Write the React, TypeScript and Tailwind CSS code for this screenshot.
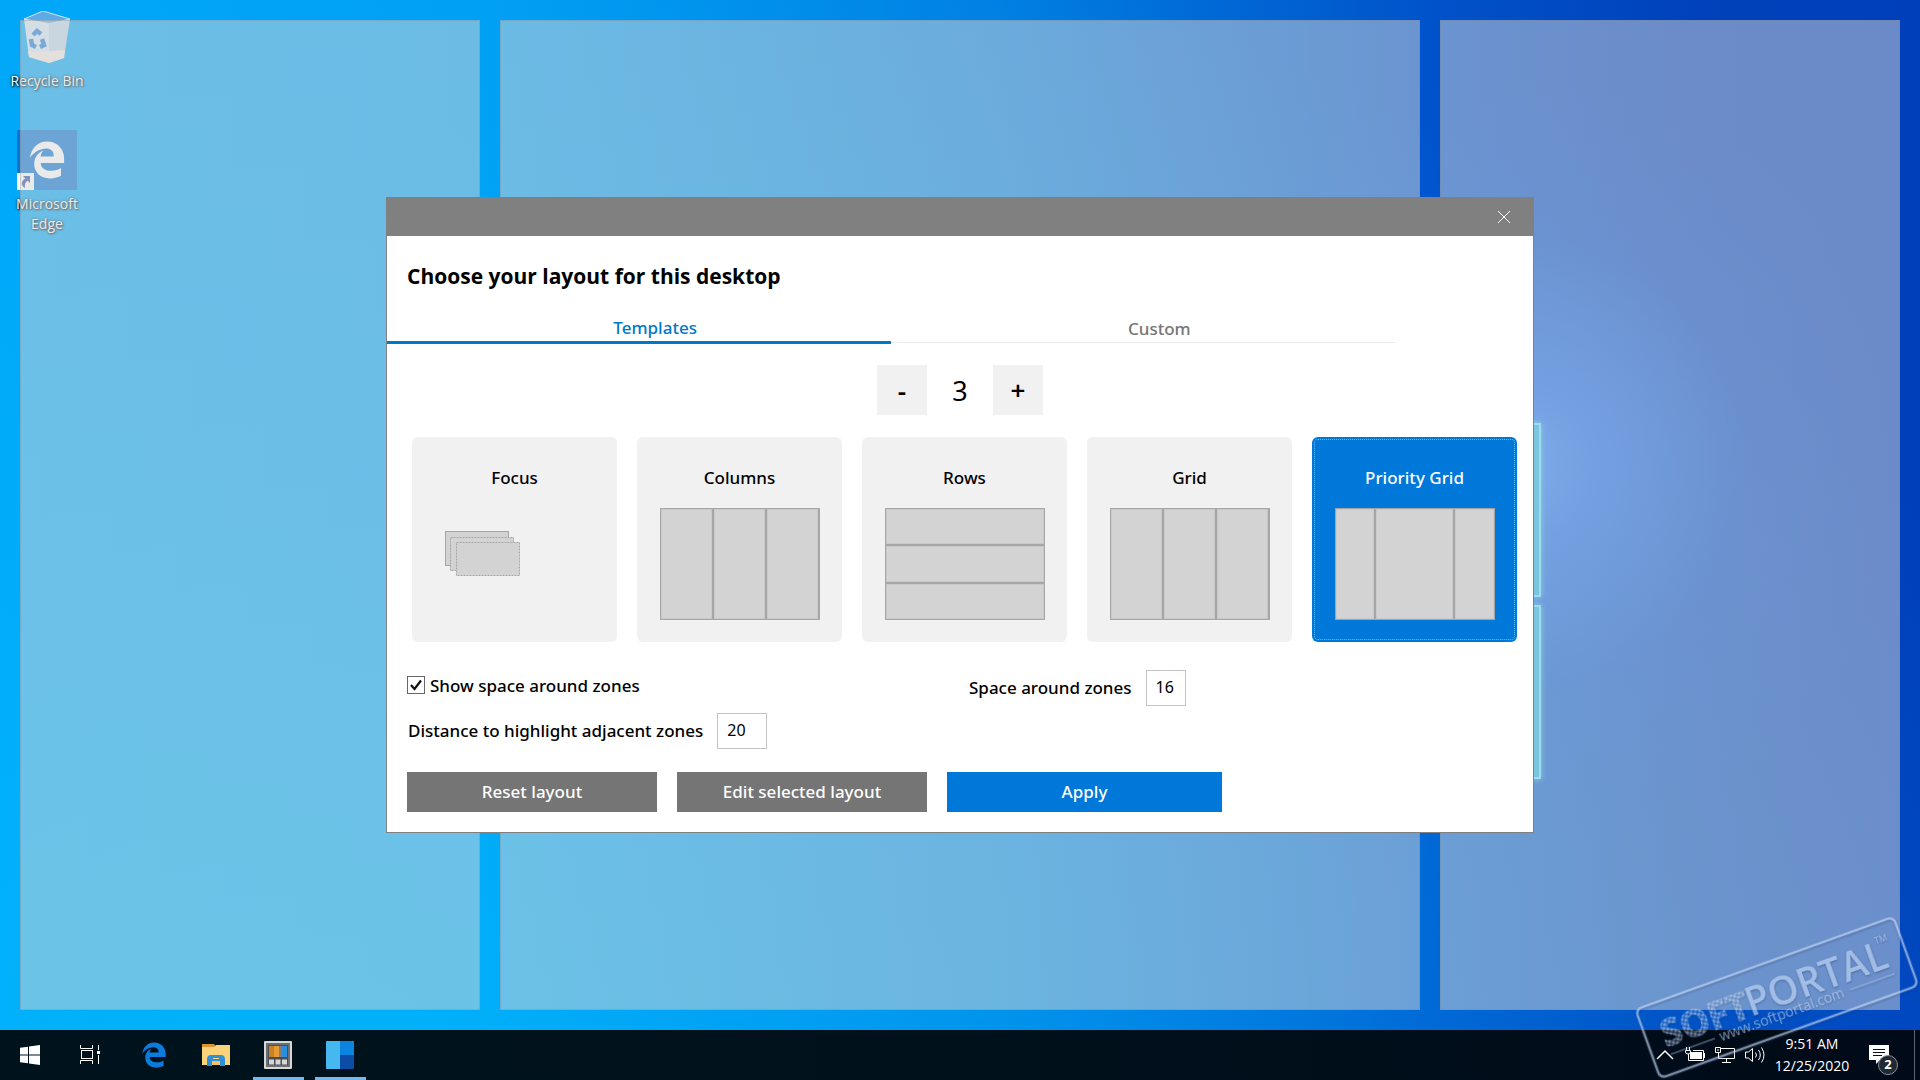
import { useState } from "react";
import type { ReactNode } from "react";
import { FaEdgeLegacy } from "react-icons/fa";

const wallpaper =
  "bg-[radial-gradient(circle_at_79%_43%,rgba(40,130,255,0.95)_0%,rgba(25,115,252,0.7)_5%,rgba(0,90,230,0.22)_14%,transparent_24%),radial-gradient(ellipse_at_15%_100%,rgba(0,195,255,0.5)_0%,rgba(0,185,255,0.3)_40%,transparent_80%),linear-gradient(90deg,#00a6f8_0%,#009ff4_25%,#007fe2_52%,#0052ca_75%,#0042bb_88%,#003fba_100%)]";

function RecycleBinIcon() {
  return (
    <svg viewBox="0 0 46 53" className="h-[53px] w-[46px]" aria-hidden="true">
      <path d="M0 8 L19 0 L46 8 L25 13 Z" fill="#5fa9e6" stroke="#cfe3f2" strokeWidth="1" />
      <path d="M0 8 L25 12 L25 52 L5 46 Z" fill="#d4e6f2" />
      <path d="M25 12 L46 8 L40 47 L25 52 Z" fill="#bcd6ea" />
      <path d="M4 40 L25 40 L41 39 L40 47 L25 52 L5 46 Z" fill="#f0e8e2" />
      <g fill="none" stroke="#1f7cd6" strokeWidth="4.5">
        <path d="M9 24 L13 20 L17 23" />
        <path d="M7 28 L8 34 L12 36" />
        <path d="M16 36 L20 34 L18 28" />
      </g>
    </svg>
  );
}

function ShortcutBadge() {
  return (
    <svg viewBox="0 0 17 17" className="absolute bottom-0 left-0 size-[17px]" aria-hidden="true">
      <rect width="17" height="17" fill="#fff" />
      <path d="M6 3 H13 V10 L10.7 7.8 C8 9.5 7.5 11.5 8 15 C3.5 12 4 8 8.3 5.4 Z" fill="#2c4fa3" />
    </svg>
  );
}

function DesktopIcons() {
  const label = "text-center text-[14px] leading-5 text-white [text-shadow:1px_1px_2px_#000,0_0_3px_#000]";
  return (
    <nav aria-label="Desktop" className="flex w-[94px] flex-col items-center pt-[11px]">
      <a href="#recycle" className="flex flex-col items-center gap-[7px]">
        <RecycleBinIcon />
        <span className={label}>Recycle Bin</span>
      </a>
      <a href="#edge" className="mt-[39px] flex flex-col items-center gap-1">
        <span className="relative flex size-[60px] items-center justify-center bg-[#0374d4]">
          <FaEdgeLegacy className="size-[38px] text-white" />
          <ShortcutBadge />
        </span>
        <span className={label}>
          Microsoft
          <br />
          Edge
        </span>
      </a>
    </nav>
  );
}

function WallpaperWindow() {
  const pane = "h-[174px] w-10 border-2 border-[#5fe6ff] bg-[#20b4ea] shadow-[0_0_6px_#4cc8ff]";
  return (
    <div className="grid justify-items-end pr-[379px]">
      <div className="flex flex-col justify-center gap-2 self-center pt-[172px]">
        <div className={pane} />
        <div className={pane} />
      </div>
    </div>
  );
}

function Zones() {
  const zone = "border border-[#808080]/30 bg-[#d6d6d6]/50";
  return (
    <div className="pointer-events-none relative grid grid-cols-[1fr_2fr_1fr] gap-5 p-5">
      <div className={zone} />
      <div className={zone} />
      <div className={zone} />
    </div>
  );
}

function FocusPreview() {
  return (
    <svg viewBox="0 0 160 112" className="h-[112px] w-[160px]" aria-hidden="true">
      <g fill="#d3d3d3" stroke="#a6a6a6">
        <rect x="10.5" y="23.5" width="63" height="34" />
        <rect x="15.5" y="29.5" width="63" height="33" strokeDasharray="2 1" />
        <rect x="21.5" y="34.5" width="63" height="33" strokeDasharray="2 1" />
      </g>
    </svg>
  );
}

function Cells({ layout }: { layout: string }) {
  const cell = "border border-[#c9c9c9] bg-[#d3d3d3]";
  return (
    <span className={`grid h-[112px] w-[160px] gap-[2px] border border-[#a6a6a6] bg-[#a6a6a6] ${layout}`}>
      <span className={cell} />
      <span className={cell} />
      <span className={cell} />
    </span>
  );
}

const templates: { name: string; preview: ReactNode }[] = [
  { name: "Focus", preview: <FocusPreview /> },
  { name: "Columns", preview: <Cells layout="grid-cols-3" /> },
  { name: "Rows", preview: <Cells layout="grid-rows-3" /> },
  { name: "Grid", preview: <Cells layout="grid-cols-3" /> },
  { name: "Priority Grid", preview: <Cells layout="grid-cols-[1fr_2fr_1fr]" /> },
];

function LayoutDialog() {
  const [selected, setSelected] = useState("Priority Grid");
  const [count, setCount] = useState(3);
  const step = "flex size-[50px] items-center justify-center bg-[#f1f1f1] text-[26px] font-semibold";
  const field = "h-9 border border-[#c4c4c4] bg-white px-[9px] pb-[2px] text-[16px] text-black";
  const action = "h-10 text-[17px] font-medium text-white";
  return (
    <section
      role="dialog"
      aria-label="Layout"
      className="pointer-events-auto w-[1148px] max-w-full border border-[#808080] bg-white font-['Noto_Sans','Open_Sans',sans-serif] text-black"
    >
      <header className="flex h-[38px] justify-end bg-[#808080] pr-[6px]">
        <button type="button" aria-label="Close" className="flex w-[46px] items-center justify-center">
          <svg viewBox="0 0 12 12" className="size-3" aria-hidden="true">
            <path d="M0 0 L12 12 M12 0 L0 12" stroke="#fff" strokeWidth="1" />
          </svg>
        </button>
      </header>
      <div className="pt-[26px] pb-5">
        <h1 className="px-5 font-['Open_Sans',sans-serif] text-[21px] leading-7 font-bold">
          Choose your layout for this desktop
        </h1>
        <div role="tablist" className="mt-[25px] grid w-[88%] grid-cols-2 text-[17px] leading-[26px] font-medium">
          <button
            type="button"
            role="tab"
            aria-selected="true"
            className="h-[29px] border-b-[3px] border-[#0077c8] pl-8 text-[#0077c8]"
          >
            Templates
          </button>
          <button
            type="button"
            role="tab"
            aria-selected="false"
            className="h-7 border-b border-[#ececec] pl-8 text-[#767676]"
          >
            Custom
          </button>
        </div>
        <div className="mt-[21px] flex items-center justify-center">
          <button type="button" aria-label="Fewer zones" className={step} onClick={() => setCount(Math.max(1, count - 1))}>
            -
          </button>
          <output className="w-[66px] pt-[2px] text-center text-[27px] leading-9">{count}</output>
          <button type="button" aria-label="More zones" className={step} onClick={() => setCount(count + 1)}>
            +
          </button>
        </div>
        <div className="mt-[22px] grid grid-cols-5 gap-5 pr-4 pl-[25px]">
          {templates.map(({ name, preview }) => (
            <button
              key={name}
              type="button"
              aria-pressed={selected === name}
              onClick={() => setSelected(name)}
              className={
                "flex h-[205px] flex-col items-center rounded-[6px] pt-7 text-[17px] font-medium " +
                (selected === name
                  ? "bg-[#0078d9] text-white outline-1 -outline-offset-3 outline-dotted outline-[#5cc0ff]"
                  : "bg-[#f1f1f1]")
              }
            >
              <span className="mb-[17px] leading-[26px]">{name}</span>
              {preview}
            </button>
          ))}
        </div>
        <div className="mt-7 grid grid-cols-2 px-5 text-[17px] font-medium">
          <label className="flex h-9 items-center gap-[5px] pb-1">
            <span className="mb-[2px] grid *:[grid-area:1/1]">
              <input
                type="checkbox"
                defaultChecked
                className="peer size-[18px] appearance-none border border-[#666] bg-white"
              />
              <svg viewBox="0 0 18 18" className="pointer-events-none invisible size-[18px] peer-checked:visible" aria-hidden="true">
                <path d="M4 9 L7.5 13 L14 4.5" fill="none" stroke="#111" strokeWidth="2.2" />
              </svg>
            </span>
            Show space around zones
          </label>
          <div className="flex items-center gap-[14px] pl-[9px]">
            <label htmlFor="space">Space around zones</label>
            <input id="space" defaultValue="16" className={`${field} w-10 font-normal`} />
          </div>
        </div>
        <div className="mt-[7px] flex items-center gap-[14px] px-[21px] text-[17px] font-medium">
          <label htmlFor="distance">Distance to highlight adjacent zones</label>
          <input id="distance" defaultValue="20" className={`${field} w-[50px] font-normal`} />
        </div>
        <div className="mt-[23px] flex gap-5 px-5">
          <button type="button" className={`${action} w-[250px] bg-[#757575]`}>
            Reset layout
          </button>
          <button type="button" className={`${action} w-[250px] bg-[#757575]`}>
            Edit selected layout
          </button>
          <button type="button" className={`${action} w-[275px] bg-[#0078d9]`}>
            Apply
          </button>
        </div>
      </div>
    </section>
  );
}

function StartIcon() {
  return (
    <svg viewBox="0 0 20 20" className="size-5" fill="#fff" aria-hidden="true">
      <path d="M0 2.8 L8 1.7 V9.5 H0 Z M9 1.5 L20 0 V9.5 H9 Z M0 10.5 H8 V18.3 L0 17.2 Z M9 10.5 H20 V20 L9 18.5 Z" />
    </svg>
  );
}

function TaskViewIcon() {
  return (
    <svg viewBox="0 0 20 20" className="size-5" fill="none" stroke="#fff" aria-hidden="true">
      <path d="M0.5 0 V3.5 H12.5 V0 M0.5 19 V15.5 H12.5 V19 M18.5 0 V5 M18.5 10 V19" />
      <rect x="1.5" y="5.5" width="11" height="8" />
      <rect x="17" y="6" width="3" height="3" fill="#fff" stroke="none" />
    </svg>
  );
}

function FolderIcon() {
  return (
    <svg viewBox="0 0 28 24" className="h-6 w-7" aria-hidden="true">
      <path d="M0 1 H12 L14 4 H0 Z" fill="#d9952f" />
      <path d="M0 4 H12 L14 2 H28 V22 H0 Z" fill="#f9d27a" />
      <path d="M5 23 V16 Q5 12 9 12 H19 Q23 12 23 16 V23 H18 V18 H10 V23 Z" fill="#2f8fd8" />
      <path d="M10 22 V18 H18 V22 Z" fill="#f3c25c" />
      <path d="M11 15.5 H17" stroke="#f9d27a" strokeWidth="1" />
    </svg>
  );
}

function PowerToysIcon() {
  return (
    <svg viewBox="0 0 28 28" className="size-7" aria-hidden="true">
      <rect width="28" height="28" rx="1" fill="#d8d8d4" />
      <rect x="2" y="2" width="24" height="24" fill="#6c6e74" />
      <rect x="4" y="4" width="20" height="20" fill="#4a4d55" />
      <rect x="5" y="5" width="5" height="11" fill="#c98222" />
      <rect x="10" y="5" width="5" height="11" fill="#e59a34" />
      <rect x="15" y="5" width="3" height="11" fill="#8c7b6a" />
      <rect x="18" y="5" width="5" height="11" fill="#2a90dd" />
      <rect x="5" y="18.5" width="5" height="5" fill="#d6d6d6" />
      <rect x="11.5" y="18.5" width="5" height="5" fill="#d6d6d6" />
      <rect x="18" y="18.5" width="5" height="5" fill="#d6d6d6" />
    </svg>
  );
}

function FancyZonesIcon() {
  return (
    <svg viewBox="0 0 28 28" className="size-7" aria-hidden="true">
      <rect width="28" height="28" rx="1" fill="#45b8f0" />
      <rect x="14" width="14" height="14" fill="#0a84e0" />
      <rect x="14" y="14" width="14" height="14" fill="#0c4ba6" />
    </svg>
  );
}

function TaskButton({ label, active, children }: { label: string; active?: boolean; children: ReactNode }) {
  return (
    <button type="button" aria-label={label} className="flex w-[62px] flex-col items-center">
      <span className="flex h-[47px] items-center pt-[3px]">{children}</span>
      <span className={active ? "h-[3px] w-[51px] bg-[#76b9ed]" : "h-[3px]"} />
    </button>
  );
}

function TrayButton({ label, children }: { label: string; children: ReactNode }) {
  return (
    <button type="button" aria-label={label} className="flex w-[30px] items-center justify-center">
      <svg viewBox="0 0 20 18" className="h-[18px] w-5" fill="none" stroke="#fff" aria-hidden="true">
        {children}
      </svg>
    </button>
  );
}

function Taskbar() {
  return (
    <footer className="flex h-[50px] justify-between bg-[linear-gradient(90deg,#00131d,#00111c_50%,#000a18)] text-white">
      <div className="flex">
        <button type="button" aria-label="Start" className="flex w-[60px] items-center justify-center">
          <StartIcon />
        </button>
        <button type="button" aria-label="Task view" className="mr-[3px] flex w-[60px] items-center justify-center">
          <TaskViewIcon />
        </button>
        <TaskButton label="Microsoft Edge">
          <FaEdgeLegacy className="size-[26px] text-[#0b7bdc]" />
        </TaskButton>
        <TaskButton label="File Explorer">
          <FolderIcon />
        </TaskButton>
        <TaskButton label="PowerToys" active>
          <PowerToysIcon />
        </TaskButton>
        <TaskButton label="FancyZones" active>
          <FancyZonesIcon />
        </TaskButton>
      </div>
      <div className="flex">
        <TrayButton label="Show hidden icons">
          <path d="M2 13 L10 5 L18 13" strokeWidth="1.5" />
        </TrayButton>
        <TrayButton label="Battery">
          <path d="M1.5 1 V4 M4.5 1 V4 M0.5 4.5 H5.5 V6 Q5 8 3 8 Q0.5 8 0.5 6 Z M3.5 8 V14.5 H18.5 V4.5 H8 M19.5 7 V12" />
          <rect x="5" y="6" width="12" height="7" fill="#fff" stroke="none" />
        </TrayButton>
        <TrayButton label="Network">
          <path d="M6 2.5 H19.5 V12.5 H3.5 M0.5 1.5 H5.5 V6.5 H0.5 Z M2 4 H4 M3.5 6.5 V12.5 M11.5 12.5 V16.5 M7 16.5 H16" />
        </TrayButton>
        <TrayButton label="Volume">
          <path d="M0.5 6 H3.5 L7.5 2.5 V15.5 L3.5 12 H0.5 Z M10.5 6.5 Q12.5 9 10.5 11.5 M13.5 4 Q17 9 13.5 14 M16.5 1.5 Q21.5 9 16.5 16.5" />
        </TrayButton>
        <button type="button" className="flex w-[84px] flex-col items-center justify-center text-[14px] leading-[22px]">
          <span>9:51 AM</span>
          <span>12/25/2020</span>
        </button>
        <button type="button" aria-label="2 new notifications" className="relative flex w-[60px] items-center pl-[15px]">
          <svg viewBox="0 0 20 20" className="size-5" aria-hidden="true">
            <path d="M0 0 H20 V15 H11 L7 19 V15 H0 Z" fill="#fff" />
            <path d="M4 4.5 H16 M4 7.5 H16 M4 10.5 H13" stroke="#06101c" strokeWidth="1" />
          </svg>
          <span className="absolute bottom-[5px] left-6 flex size-5 items-center justify-center rounded-full border border-[#8a8f96] bg-[#202832] text-[13px] font-bold">
            2
          </span>
        </button>
        <button type="button" aria-label="Show desktop" className="w-[6px] border-l border-[#5a6470]" />
      </div>
    </footer>
  );
}

function Stamp() {
  return (
    <svg
      viewBox="0 0 290 168"
      className="pointer-events-none absolute right-0 bottom-0 h-[168px] w-[290px] font-['Open_Sans',sans-serif]"
      aria-hidden="true"
    >
      <defs>
        <pattern id="dots" width="4" height="4" patternUnits="userSpaceOnUse" patternTransform="rotate(30)">
          <rect x="0.5" y="0.5" width="3" height="3" fill="#c8dcf8" />
        </pattern>
      </defs>
      <g
        transform="translate(147 86) rotate(-19.8)"
        opacity="0.6"
        className="[filter:drop-shadow(0_1px_1px_rgba(20,40,90,0.6))]"
      >
        <rect x="-137" y="-37" width="274" height="73" rx="6" fill="none" stroke="#c8dcf8" strokeWidth="2.5" />
        <text x="-121" y="9" fontSize="37" fontWeight="700" fill="url(#dots)" stroke="url(#dots)" strokeWidth="1.5">
          SOFT
        </text>
        <text x="-31" y="9" fontSize="39" fontWeight="600" fill="#c8dcf8">
          PORTAL
        </text>
        <text x="111" y="-17" fontSize="9" fill="#c8dcf8">
          TM
        </text>
        <text x="-67" y="22" fontSize="14" fill="#c8dcf8">
          www.softportal.com
        </text>
        <path d="M-119 17 H-72 M72 17 H119" stroke="#c8dcf8" strokeWidth="1" />
      </g>
    </svg>
  );
}

export default function App() {
  return (
    <div
      className={`relative flex min-h-screen flex-col overflow-hidden font-['Open_Sans','Noto_Sans',sans-serif] ${wallpaper}`}
    >
      <main className="grid flex-1 *:[grid-area:1/1]">
        <WallpaperWindow />
        <DesktopIcons />
        <Zones />
        <div className="pointer-events-none relative grid place-items-center">
          <LayoutDialog />
        </div>
      </main>
      <Taskbar />
      <Stamp />
    </div>
  );
}
